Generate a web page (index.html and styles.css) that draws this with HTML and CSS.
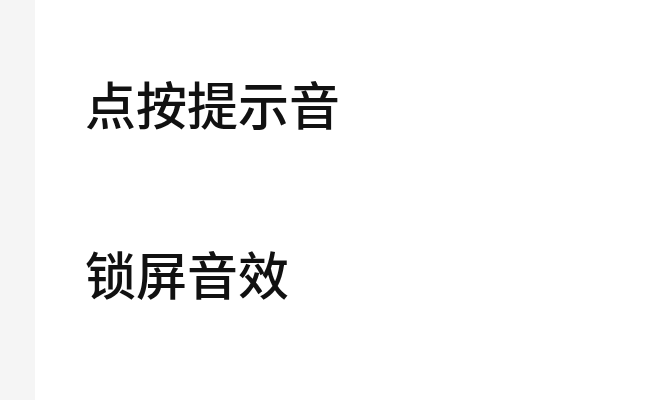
FILE: index.html
```html
<!DOCTYPE html>
<html lang="zh-CN">
  <head>
    <meta charset="UTF-8" />
    <title>声音设置</title>
    <meta name="viewport" content="width=device-width, initial-scale=1.0" />
    <link rel="stylesheet" href="styles.css">
  </head>
  <body>
    <div class="pagina">
      <div class="lateral"></div>
      <ul class="lista">
        <li class="item">点按提示音</li>
        <li class="item">锁屏音效</li>
      </ul>
    </div>
  </body>
</html>
```

FILE: styles.css
```css
body {
  margin: 0;
  font-family: "Noto Sans CJK SC", "Noto Sans", sans-serif;
  background-color: #ffffff;
}

.pagina {
  display: flex;
  height: 400px;
  overflow: hidden;
}

.lateral {
  width: 35px;
  flex-shrink: 0;
  background-color: #f5f5f5;
}

.lista {
  flex: 1;
  list-style: none;
  margin: 0;
  padding: 18px 0 0 50px;
}

.item {
  display: flex;
  align-items: center;
  height: 170px;
  font-size: 51px;
  font-weight: 500;
  color: #111111;
}
```
